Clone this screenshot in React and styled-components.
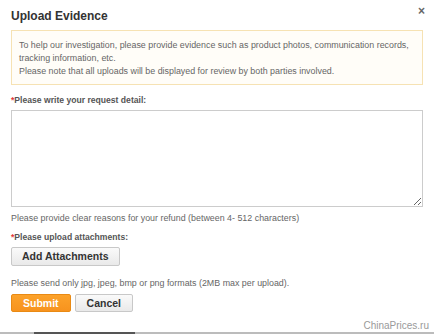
import React from "react";
import styled, { createGlobalStyle } from "styled-components";

const GlobalStyle = createGlobalStyle`
  html, body {
    margin: 0;
    padding: 0;
    background: #fff;
  }
  body {
    font-family: "Liberation Sans", Arial, sans-serif;
    width: 434px;
    height: 334px;
    overflow: hidden;
  }
`;

const Modal = styled.div`
  position: relative;
  width: 434px;
  height: 334px;
  box-sizing: border-box;
  padding: 9px 11px 0;
  background: #fff;
`;

const Header = styled.div`
  display: flex;
  justify-content: space-between;
  align-items: flex-start;
  height: 21px;
`;

const Title = styled.h2`
  margin: 0;
  font-size: 12px;
  font-weight: bold;
  color: #333;
`;

const Close = styled.span`
  font-size: 12px;
  color: #666;
  font-weight: bold;
  margin-top: -5px;
  margin-right: -2px;
`;

const Notice = styled.div`
  border: 1px solid #f6e2b3;
  background: #fffdf8;
  padding: 8px 7px 6px;
  font-size: 8.9px;
  line-height: 13px;
  color: #666;
`;

const Label = styled.div`
  margin-top: ${(p) => p.$top || 10}px;
  font-size: 8.6px;
  font-weight: bold;
  color: #555;
  &::before {
    content: "*";
    color: #e4393c;
  }
`;

const TextArea = styled.textarea`
  display: block;
  box-sizing: border-box;
  width: 412px;
  height: 97px;
  margin-top: 5px;
  border: 1px solid #ccc;
  resize: vertical;
  outline: none;
`;

const Hint = styled.div`
  margin-top: ${(p) => p.$top || 6}px;
  font-size: 8.9px;
  color: #666;
`;

const Button = styled.button`
  box-sizing: border-box;
  height: ${(p) => p.$h || 18}px;
  padding: 0 ${(p) => p.$pad || 10}px;
  font-family: "Liberation Sans", Arial, sans-serif;
  font-size: 10.5px;
  font-weight: bold;
  border-radius: 2px;
  cursor: pointer;
  color: ${(p) => (p.$primary ? "#fff" : "#333")};
  border: 1px solid ${(p) => (p.$primary ? "#e98a14" : "#c8c8c8")};
  background: ${(p) =>
    p.$primary
      ? "linear-gradient(#fca22a, #f7931e)"
      : "linear-gradient(#fafafa, #e9e9e9)"};
`;

const ButtonRow = styled.div`
  display: flex;
  gap: 4px;
  margin-top: 6px;
`;

const AddRow = styled.div`
  margin-top: 4px;
`;

const Watermark = styled.div`
  position: absolute;
  right: 5px;
  bottom: 3px;
  font-size: 10px;
  color: #9a9a9a;
`;

const BottomBar = styled.div`
  position: absolute;
  left: 0;
  right: 0;
  bottom: 0;
  height: 2px;
  background: #bcbcbc;
  &::after {
    content: "";
    position: absolute;
    left: 34px;
    width: 101px;
    top: 0;
    bottom: 0;
    background: #555;
  }
`;

export default function App() {
  return (
    <>
      <GlobalStyle />
      <Modal>
        <Header>
          <Title>Upload Evidence</Title>
          <Close>×</Close>
        </Header>
        <Notice>
          To help our investigation, please provide evidence such as product photos, communication records,
          tracking information, etc.
          <br />
          Please note that all uploads will be displayed for review by both parties involved.
        </Notice>
        <Label $top={10}>Please write your request detail:</Label>
        <TextArea />
        <Hint $top={6}>Please provide clear reasons for your refund (between 4- 512 characters)</Hint>
        <Label $top={9}>Please upload attachments:</Label>
        <AddRow>
          <Button $h={19} $pad={10}>Add Attachments</Button>
        </AddRow>
        <Hint $top={12}>Please send only jpg, jpeg, bmp or png formats (2MB max per upload).</Hint>
        <ButtonRow>
          <Button $primary $pad={11}>Submit</Button>
          <Button $pad={11}>Cancel</Button>
        </ButtonRow>
        <Watermark>ChinaPrices.ru</Watermark>
        <BottomBar />
      </Modal>
    </>
  );
}
